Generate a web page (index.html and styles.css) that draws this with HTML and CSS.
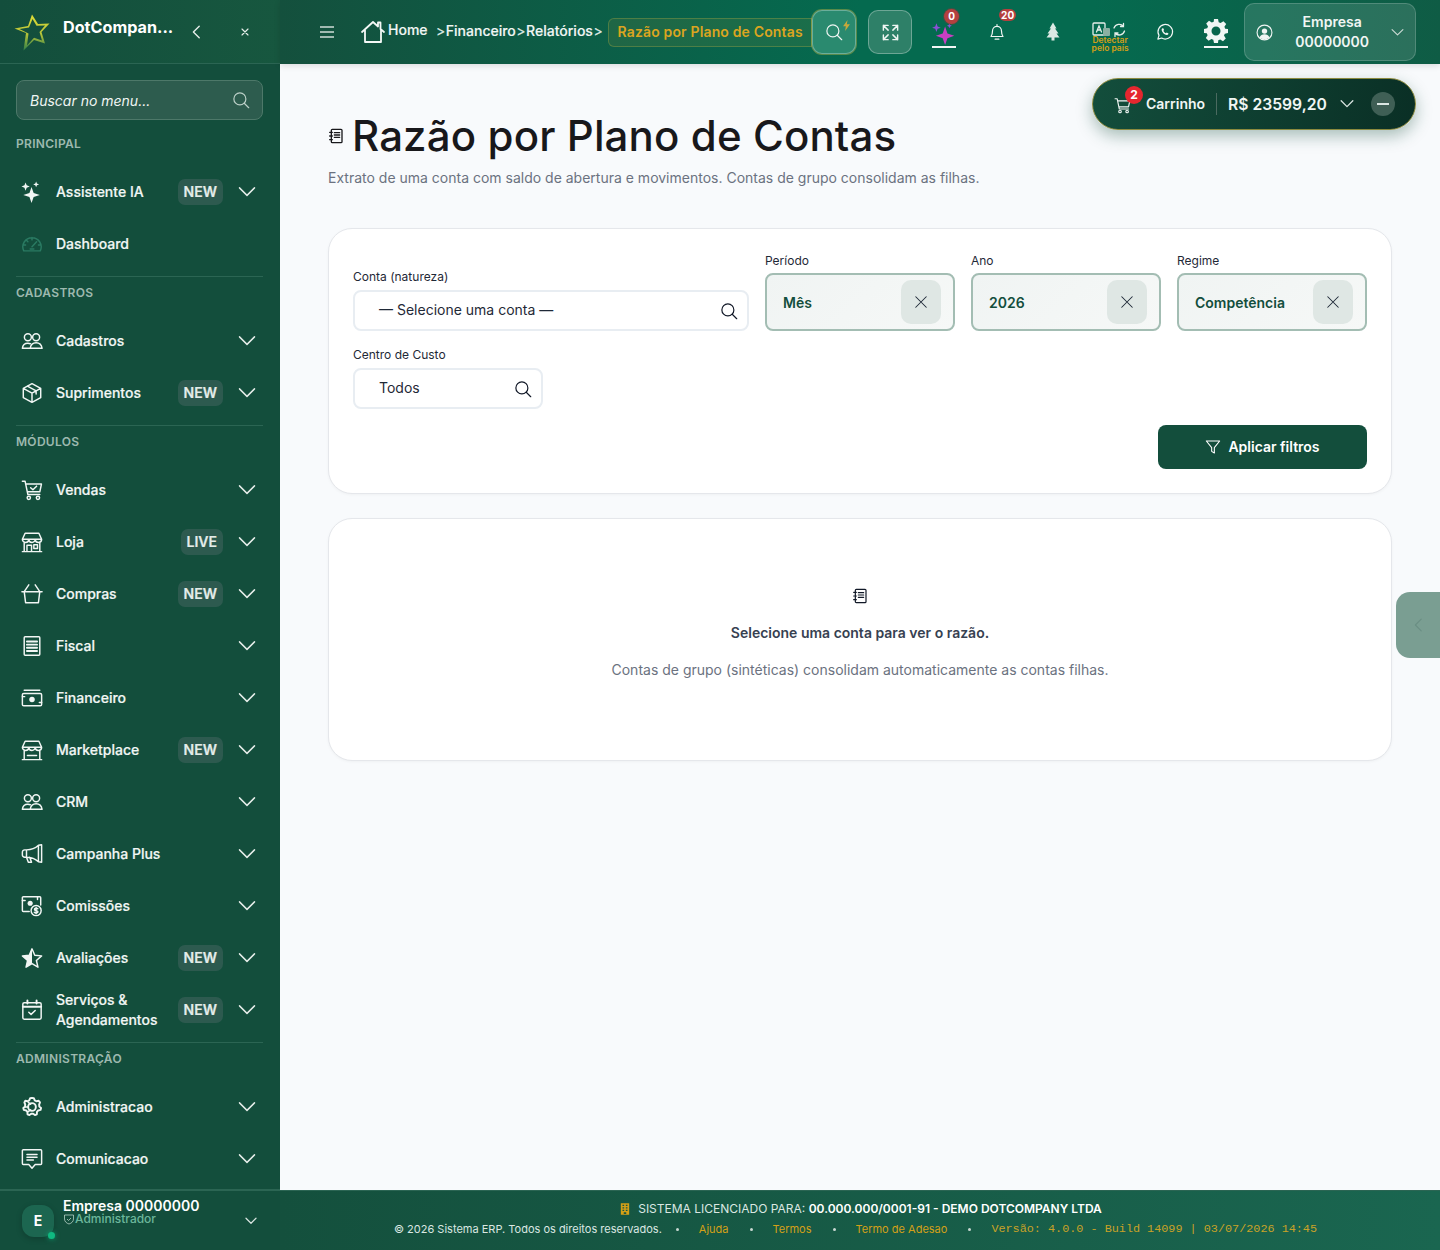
FILE: index.html
```html
<!DOCTYPE html>
<html lang="pt-BR">
<head>
  <meta charset="UTF-8">
  <title>Razão por Plano de Contas</title>
  <meta name="viewport" content="width=device-width, initial-scale=1.0">
  <link rel="stylesheet" href="styles.css">
</head>
<body>

<!-- icon set -->
<svg class="defs" aria-hidden="true">
  <symbol id="i-sparkle" viewBox="0 0 24 24"><path class="solid" d="M11.500 6.500L13.800 13 20.500 15.200 13.800 17.500 11.500 24 9.200 17.500 2.500 15.200 9.200 13ZM5 1.500L6.200 4.700 9.500 6 6.200 7.300 5 10.500 3.800 7.300.5 6 3.800 4.700ZM16.500 .5L17.400 2.800 19.700 3.700 17.400 4.600 16.500 6.900 15.600 4.600 13.300 3.700 15.600 2.800Z"/></symbol>
  <symbol id="i-gauge" viewBox="0 0 24 24"><path d="M3 19.500A10 10 0 1 1 21 19.500H3ZM12 5v2.500M5 13H2.500M21.500 13H19M6 8l1.500 1.500M12 15l5-5.500M10 17.500h4"/></symbol>
  <symbol id="i-users" viewBox="0 0 24 24"><circle cx="7.500" cy="8" r="3.800"/><circle cx="16.500" cy="8" r="3.800"/><path d="M1.500 20c.4-3.500 2.700-5.600 6-5.600 1 0 1.900.2 2.700.6M10 20c.6-3.800 3.200-6 6.500-6s5.900 2.200 6.500 6H1.500"/></symbol>
  <symbol id="i-box" viewBox="0 0 24 24"><path d="M12 1.800l9.500 5.200v10L12 22.200 2.500 17V7L12 1.800ZM2.500 7l9.500 5.200L21.500 7M12 12.200v10M7 4.400l9.500 5.200v3.600"/></symbol>
  <symbol id="i-cart" viewBox="0 0 24 24"><path d="M1.500 2.500h3l3 14.500h13M5.300 5.500h17l-1.800 8.500H7"/><circle cx="8.500" cy="20.500" r="1.800"/><circle cx="18.500" cy="20.500" r="1.800"/><path d="M10.500 9.500l2.500 2.300 4-4"/></symbol>
  <symbol id="i-store" viewBox="0 0 24 24"><path d="M1.500 22.500h21M3.500 12.500v10M20.500 12.500v10M4.500 2.500h15l3 6.500a3.500 3.500 0 0 1-7 0 3.500 3.500 0 0 1-7 0 3.500 3.500 0 0 1-7 0l3-6.500ZM1.500 9h21M6.500 22.500v-7h5v7M14 15h4v4h-4z"/></symbol>
  <symbol id="i-basket" viewBox="0 0 24 24"><path d="M1 9.500h22M3.500 9.500l5-7.500M20.500 9.500l-5-7.500M3.500 9.500l1.500 12h14l1.500-12"/></symbol>
  <symbol id="i-receipt" viewBox="0 0 24 24"><rect x="3.500" y="2" width="17" height="20" rx="1"/><path class="thick" d="M6.500 7h11M6.500 10.500h11M6.500 14h11M6.500 17.500h11"/></symbol>
  <symbol id="i-money" viewBox="0 0 24 24"><path d="M3.500 3.500h17" /><rect x="1.500" y="7" width="21" height="13.500" rx="1.500"/><circle class="solid" cx="12" cy="13.700" r="3"/><path d="M1.500 10.500h2.500M20 17h2.500"/></symbol>
  <symbol id="i-shop" viewBox="0 0 24 24"><path d="M1.500 22.500h21M3.500 12.500v10M20.500 12.500v10M4.500 2.500h15l3 6.500a3.500 3.500 0 0 1-7 0 3.500 3.500 0 0 1-7 0 3.500 3.500 0 0 1-7 0l3-6.500ZM1.500 9h21M7 18h10"/></symbol>
  <symbol id="i-mega" viewBox="0 0 24 24"><path d="M19 2.500v18M22.500 2v19L19 20.500C15 16.500 10 15.500 6 15.500H4a2.500 2.500 0 0 1-2.500-2.500v-3A2.500 2.500 0 0 1 4 7.500h2c4 0 9-1 13-5l3.500-.500ZM6 7.500v8l2 5.500h3.500L9.500 15.500"/></symbol>
  <symbol id="i-coins" viewBox="0 0 24 24"><path d="M9 18H2.500a1 1 0 0 1-1-1V3a1 1 0 0 1 1-1h18a1 1 0 0 1 1 1v8"/><circle class="solid" cx="10" cy="9" r="2.800"/><path d="M1.500 6h3M18 2v3"/><circle cx="16.500" cy="17" r="5.500"/><path d="M18.300 15c-.8-.9-3.600-.9-3.600.8 0 1.700 3.800.8 3.800 2.500 0 1.600-3 1.600-4 .6M16.500 13.500v7"/></symbol>
  <symbol id="i-star" viewBox="0 0 24 24"><path d="M12 2l3 7 7.500.7-5.700 5 1.700 7.300-6.500-3.900-6.500 3.900 1.700-7.300-5.700-5L9 9l3-7Z"/><path class="solid" d="M12 2L9 9l-7.500.7 5.700 5-1.700 7.300 6.500-3.900V2Z"/></symbol>
  <symbol id="i-cal" viewBox="0 0 24 24"><rect x="2" y="4" width="20" height="18" rx="1.500"/><path class="thick" d="M2 8.500h20M7 1.500V5M17 1.500V5"/><path d="M8.500 14.500l2.500 2.300 4.500-4.300"/></symbol>
  <symbol id="i-gear" viewBox="0 0 24 24"><path class="thick" d="M12 2l2 .3 1 2.400 1.800 1 2.500-.5 1.400 1.800-.9 2.400.2 2.100 1.900 1.500-.6 2.200-2.500.6-1.400 1.600-.1 2.600-2.100.8-2-1.500h-2l-2 1.500-2.100-.8-.1-2.600-1.400-1.600-2.500-.6-.6-2.200 1.900-1.500.2-2.100-.9-2.400L4.700 5.200l2.500.5 1.800-1 1-2.400L12 2Z"/><circle class="thick" cx="12" cy="12" r="4.200"/><path d="M4 12h4M8 7l2.500 2M8 17l2.500-2"/></symbol>
  <symbol id="i-chat" viewBox="0 0 24 24"><path d="M2.500 2h19a1 1 0 0 1 1 1v14a1 1 0 0 1-1 1h-6l-3.500 4-3.500-4h-6a1 1 0 0 1-1-1V3a1 1 0 0 1 1-1ZM6.500 7h11M6.500 10h11M6.500 13h7"/></symbol>
  <symbol id="i-chev" viewBox="0 0 24 24"><path d="M2 6.500l10 10 10-10"/></symbol>
  <symbol id="i-search" viewBox="0 0 24 24"><circle cx="10.500" cy="10.500" r="8"/><path d="M16.300 16.300l6 6"/></symbol>
  <symbol id="i-x" viewBox="0 0 24 24"><path d="M3 3l18 18M21 3L3 21"/></symbol>
  <symbol id="i-notebook" viewBox="0 0 24 24"><rect x="5" y="2" width="16" height="20" rx="1.500"/><path d="M9.500 7h8M9.500 10.500h8M9.500 14h8M2.500 6.500h4M2.500 12h4M2.500 17.500h4"/></symbol>
</svg>

<div class="app">

  <!-- Sidebar -->
  <aside class="sidebar">
    <div class="side-head">
      <svg class="logo" viewBox="0 0 40 38">
        <defs><linearGradient id="logoGrad" x1="0" y1="0" x2="0" y2="1"><stop offset="0" stop-color="#e0dd36"/><stop offset=".55" stop-color="#b4c239"/><stop offset="1" stop-color="#2f7f48"/></linearGradient></defs>
        <path fill="url(#logoGrad)" fill-rule="evenodd" d="M18 1.500L24 11 35.500 10.500 27.500 19 31 30.500 20 27 9.500 37.500 12 20 .5 15.500 14 13ZM18.500 6L15 14.500 5.500 16 14.500 20.500 13 32.500 20 24.800 28 27.500 25.500 19 31 12.500 22.500 12.700Z"/>
      </svg>
      <span class="brand">DotCompan...</span>
      <svg class="ic collapse"><use href="#i-chev"/></svg>
      <svg class="ic close-x"><use href="#i-x"/></svg>
    </div>

    <nav class="side-nav">
      <div class="side-search">
        <span>Buscar no menu...</span>
        <svg class="ic"><use href="#i-search"/></svg>
      </div>

      <div class="side-label">PRINCIPAL</div>
      <a class="item"><svg class="ic"><use href="#i-sparkle"/></svg><span class="name">Assistente IA</span><span class="badge">NEW</span><svg class="ic chev"><use href="#i-chev"/></svg></a>
      <a class="item"><svg class="ic dim"><use href="#i-gauge"/></svg><span class="name">Dashboard</span></a>

      <hr class="side-line">
      <div class="side-label">CADASTROS</div>
      <a class="item"><svg class="ic"><use href="#i-users"/></svg><span class="name">Cadastros</span><svg class="ic chev"><use href="#i-chev"/></svg></a>
      <a class="item"><svg class="ic"><use href="#i-box"/></svg><span class="name">Suprimentos</span><span class="badge">NEW</span><svg class="ic chev"><use href="#i-chev"/></svg></a>

      <hr class="side-line">
      <div class="side-label">MÓDULOS</div>
      <a class="item"><svg class="ic"><use href="#i-cart"/></svg><span class="name">Vendas</span><svg class="ic chev"><use href="#i-chev"/></svg></a>
      <a class="item"><svg class="ic"><use href="#i-store"/></svg><span class="name">Loja</span><span class="badge">LIVE</span><svg class="ic chev"><use href="#i-chev"/></svg></a>
      <a class="item"><svg class="ic"><use href="#i-basket"/></svg><span class="name">Compras</span><span class="badge">NEW</span><svg class="ic chev"><use href="#i-chev"/></svg></a>
      <a class="item"><svg class="ic"><use href="#i-receipt"/></svg><span class="name">Fiscal</span><svg class="ic chev"><use href="#i-chev"/></svg></a>
      <a class="item"><svg class="ic"><use href="#i-money"/></svg><span class="name">Financeiro</span><svg class="ic chev"><use href="#i-chev"/></svg></a>
      <a class="item"><svg class="ic"><use href="#i-shop"/></svg><span class="name">Marketplace</span><span class="badge">NEW</span><svg class="ic chev"><use href="#i-chev"/></svg></a>
      <a class="item"><svg class="ic"><use href="#i-users"/></svg><span class="name">CRM</span><svg class="ic chev"><use href="#i-chev"/></svg></a>
      <a class="item"><svg class="ic"><use href="#i-mega"/></svg><span class="name">Campanha Plus</span><svg class="ic chev"><use href="#i-chev"/></svg></a>
      <a class="item"><svg class="ic"><use href="#i-coins"/></svg><span class="name">Comissões</span><svg class="ic chev"><use href="#i-chev"/></svg></a>
      <a class="item"><svg class="ic"><use href="#i-star"/></svg><span class="name">Avaliações</span><span class="badge">NEW</span><svg class="ic chev"><use href="#i-chev"/></svg></a>
      <a class="item"><svg class="ic"><use href="#i-cal"/></svg><span class="name">Serviços &amp; Agendamentos</span><span class="badge">NEW</span><svg class="ic chev"><use href="#i-chev"/></svg></a>

      <hr class="side-line">
      <div class="side-label">ADMINISTRAÇÃO</div>
      <a class="item"><svg class="ic"><use href="#i-gear"/></svg><span class="name">Administracao</span><svg class="ic chev"><use href="#i-chev"/></svg></a>
      <a class="item"><svg class="ic"><use href="#i-chat"/></svg><span class="name">Comunicacao</span><svg class="ic chev"><use href="#i-chev"/></svg></a>
    </nav>

    <div class="side-user">
      <div class="avatar">E<i class="online"></i></div>
      <div class="user-text">
        <strong>Empresa 00000000</strong>
        <span class="role">
          <svg viewBox="0 0 24 24"><path d="M3 4h18v8c0 5-4 8.500-9 10C7 20.500 3 17 3 12V4ZM8 12l3 3 5-5"/></svg>Administrador
        </span>
      </div>
      <svg class="ic user-chev"><use href="#i-chev"/></svg>
    </div>
  </aside>

  <!-- Main column -->
  <div class="main">
    <header class="topbar">
      <svg class="burger" viewBox="0 0 16 14"><path d="M1 2h14M1 7h14M1 12h14"/></svg>

      <div class="crumbs">
        <svg class="home" viewBox="0 0 24 24"><path d="M1 12L12 2l5 4.500V2.500h2.500V9L23 12M4 9.500V22h16V9.500"/></svg>
        <span class="crumb crumb-home">Home</span>
        <span class="sep sep-first">&gt;</span>
        <span class="crumb">Financeiro</span>
        <span class="sep">&gt;</span>
        <span class="crumb">Relatórios</span>
        <span class="sep">&gt;</span>
        <span class="crumb-now">Razão por Plano de Contas</span>
      </div>

      <button class="square square-search">
        <svg class="ic"><use href="#i-search"/></svg>
        <svg class="bolt" viewBox="0 0 10 16"><path d="M6.500 0L0 9h4l-1 7 7-10H5.500l1-6Z"/></svg>
      </button>
      <button class="square square-expand">
        <svg class="ic" viewBox="0 0 24 24"><path d="M3 9V3h6M3 3l6 6M21 9V3h-6M21 3l-6 6M3 15v6h6M3 21l6-6M21 15v6h-6M21 21l-6-6"/></svg>
      </button>

      <div class="tool tool-ai">
        <svg class="ai" viewBox="0 0 24 24">
          <path fill="#c93fc3" d="M13 7l2.200 6.300L21.500 15.500 15.200 17.700 13 24 10.800 17.700 4.500 15.500 10.800 13.300Z"/>
          <path fill="#8b4fd6" d="M5 4l1.100 2.900L9 8 6.100 9.100 5 12 3.900 9.100 1 8 3.900 6.900Z"/>
          <path fill="#8b4fd6" d="M17 4l.7 1.600L19.300 6.300 17.700 7 17 8.600 16.300 7 14.700 6.300 16.300 5.600Z"/>
        </svg>
        <span class="count count-ai">0</span>
        <i class="underline"></i>
      </div>
      <div class="tool tool-bell">
        <svg class="ic" viewBox="0 0 24 24"><path d="M4 18c1.500-2 2-4 2-7.500a6 6 0 0 1 12 0c0 3.500.5 5.500 2 7.500H4ZM12 2v2.500M9.500 21.500h5"/></svg>
        <span class="count count-bell">20</span>
      </div>
      <div class="tool tool-tree">
        <svg class="tree" viewBox="0 0 16 18"><path d="M8 0l3.500 6H10l3.500 5H11.500l3 4H9.500v3h-3v-3h-5l3-4H2.500L6 6H4.500L8 0Z"/></svg>
      </div>
      <div class="tool tool-lang">
        <svg class="lang" viewBox="0 0 36 16">
          <rect x="1" y="1" width="12" height="12" rx="1"/>
          <path d="M4.500 10L7 4l2.500 6M5.500 8h3"/>
          <rect x="11" y="6" width="7" height="8" rx="1" class="lang-back"/>
          <path d="M22 6a5.500 5.500 0 0 1 9.500-1.500M32.500 9a5.500 5.500 0 0 1-9.500 2M31.500 1.500v3h-3M23 14.500v-3.500h3"/>
        </svg>
        <span class="lang-text">Detectar<br>pelo país</span>
      </div>
      <div class="tool tool-wa">
        <svg class="ic" viewBox="0 0 24 24"><path d="M2.500 21.500l1.500-5A9.700 9.700 0 1 1 7.500 20l-5 1.500Z"/><path class="wa-fill" d="M8.500 7c-1.500 1-1.300 3 .3 5.300 1.700 2.400 4.200 4 6 3.700 1-.2 1.800-1 1.800-2l-2.300-1.300-1 1c-1.400-.4-3-2-3.500-3.500l1-1L9.700 7H8.500Z"/></svg>
      </div>
      <div class="tool tool-gear">
        <svg class="bigear" viewBox="0 0 24 24"><path fill-rule="evenodd" d="M10 0h4l.700 3.200 1.900.8 2.800-1.800 2.800 2.800-1.800 2.800.8 1.900L24 10v4l-3.200.7-.8 1.900 1.800 2.800-2.800 2.800-2.800-1.800-1.900.8L14 24h-4l-.7-3.200-1.900-.8-2.800 1.800-2.800-2.800 1.800-2.800-.8-1.900L0 14v-4l3.200-.7.8-1.900-1.800-2.800 2.800-2.800L7.800 3.600l1.900-.8L10 0Zm2 7.500a4.500 4.500 0 1 0 0 9 4.500 4.500 0 0 0 0-9Z"/></svg>
        <i class="underline"></i>
      </div>

      <div class="company">
        <svg class="ic" viewBox="0 0 24 24"><circle cx="12" cy="12" r="10.500"/><circle class="solid" cx="12" cy="10" r="3.800"/><path class="solid" d="M5 19c1.300-3 3.800-4.500 7-4.500s5.700 1.500 7 4.500c-2 1.700-4.300 2.500-7 2.500s-5-.8-7-2.500Z"/></svg>
        <div class="company-name">Empresa<br>00000000</div>
        <svg class="ic"><use href="#i-chev"/></svg>
      </div>
    </header>

    <div class="cart">
      <span class="cart-icon">
        <svg class="ic" viewBox="0 0 24 24"><path d="M1.500 2.500h3l3 14.500h13M5.300 5.500h17l-1.800 8.500H7"/><circle cx="8.500" cy="20.500" r="1.800"/><circle cx="18.500" cy="20.500" r="1.800"/></svg>
        <b class="cart-count">2</b>
      </span>
      <span class="cart-label">Carrinho</span>
      <span class="cart-total">R$ 23599,20</span>
      <svg class="ic cart-chev"><use href="#i-chev"/></svg>
      <span class="cart-min"><i></i></span>
    </div>

    <button class="side-tab"><svg class="ic"><use href="#i-chev"/></svg></button>

    <main class="content">
      <h1 class="page-title"><svg class="ic"><use href="#i-notebook"/></svg>Razão por Plano de Contas</h1>
      <p class="page-sub">Extrato de uma conta com saldo de abertura e movimentos. Contas de grupo consolidam as filhas.</p>

      <section class="card filters">
        <div class="filter-grid">
          <div class="field field-wide">
            <label>Conta (natureza)</label>
            <div class="lookup"><span>— Selecione uma conta —</span><svg class="ic"><use href="#i-search"/></svg></div>
          </div>
          <div class="field">
            <label class="tile-label">Período</label>
            <div class="tile"><span>Mês</span><button class="tile-x"><svg class="ic"><use href="#i-x"/></svg></button></div>
          </div>
          <div class="field">
            <label class="tile-label">Ano</label>
            <div class="tile"><span>2026</span><button class="tile-x"><svg class="ic"><use href="#i-x"/></svg></button></div>
          </div>
          <div class="field">
            <label class="tile-label">Regime</label>
            <div class="tile"><span>Competência</span><button class="tile-x"><svg class="ic"><use href="#i-x"/></svg></button></div>
          </div>
          <div class="field">
            <label>Centro de Custo</label>
            <div class="lookup"><span>Todos</span><svg class="ic"><use href="#i-search"/></svg></div>
          </div>
        </div>
        <div class="filter-actions">
          <button class="apply">
            <svg class="ic" viewBox="0 0 24 24"><path d="M2 3h20l-8 10v8l-4-2.500V13L2 3Z"/></svg>Aplicar filtros
          </button>
        </div>
      </section>

      <section class="card empty">
        <svg class="ic"><use href="#i-notebook"/></svg>
        <p class="empty-title">Selecione uma conta para ver o razão.</p>
        <p class="empty-sub">Contas de grupo (sintéticas) consolidam automaticamente as contas filhas.</p>
      </section>
    </main>

    <footer class="footer">
      <div class="foot-line">
        <svg class="foot-ic" viewBox="0 0 12 14"><path d="M1 0h10v14H1V0Zm2 2v1.500h2V2H3Zm4 0v1.500h2V2H7ZM3 5v1.500h2V5H3Zm4 0v1.500h2V5H7ZM3 8v1.500h2V8H3Zm4 0v1.500h2V8H7Zm-2.500 3v2h3v-2h-3Z"/></svg>
        <span>SISTEMA LICENCIADO PARA: <strong>00.000.000/0001-91 - DEMO DOTCOMPANY LTDA</strong></span>
      </div>
      <div class="foot-links">
        <span>© 2026 Sistema ERP. Todos os direitos reservados.</span>
        <i class="dot-first"></i><a>Ajuda</a>
        <i></i><a>Termos</a>
        <i></i><a>Termo de Adesao</a>
        <i></i><code>Versão: 4.0.0 - Build 14099 | 03/07/2026 14:45</code>
      </div>
    </footer>
  </div>
</div>

</body>
</html>
```

FILE: styles.css
```css
* { box-sizing: border-box; }
html, body { margin: 0; height: 100%; }
body { font-family: Inter, "Liberation Sans", sans-serif; color: #1f2937; background: #f8fafc; overflow: hidden; }
button { font-family: inherit; border: none; cursor: pointer; padding: 0; }
p, h1 { margin: 0; }
.defs { display: none; }

/* icons: stroke by default, .solid parts are filled */
.ic { width: 22px; height: 22px; fill: none; stroke: currentColor; stroke-width: 1.6; stroke-linecap: round; stroke-linejoin: round; flex: none; }
.solid { fill: currentColor; stroke: none; }
.thick { stroke-width: 2.1; }

.app { display: flex; height: 1250px; }

/* ---------- Sidebar ---------- */
.sidebar { width: 280px; flex: none; background: #134e3c; color: #f1f6f4; display: flex; flex-direction: column; }
.side-head { height: 64px; flex: none; display: flex; align-items: center; padding-left: 14px; border-bottom: 1px solid #2b6553; background: linear-gradient(90deg, #134e3c, #17573f); }
.logo { width: 40px; height: 38px; flex: none; }
.brand { width: 111px; margin: -9px 0 0 9px; font-size: 16.200px; font-weight: 700; color: #fff; white-space: nowrap; }
.collapse { width: 14px; height: 14px; margin-left: 15px; transform: rotate(90deg); color: #e5ede9; stroke-width: 2.400; }
.close-x { width: 8px; height: 8px; margin-left: 38px; stroke-width: 3.500; color: #e5ede9; }

.side-nav { flex: 1; padding: 16px 17px 0 16px; overflow: hidden; }
.side-search { height: 40px; display: flex; align-items: center; justify-content: space-between; padding: 0 12px 0 13px; background: #2d5c4e; border: 1px solid #4d7869; border-radius: 8px; font-size: 14px; font-style: italic; color: #f1f6f4; }
.side-search .ic { width: 18px; height: 18px; color: #bcd0c8; }
.side-label { margin: 16px 0 15px; font-size: 12px; line-height: 15px; font-weight: 600; letter-spacing: .3px; color: #9db9af; }
.side-line { height: 1px; margin: 6px 0 0; border: none; background: #2b6553; }
.side-line + .side-label { margin-top: 8px; }
.item { height: 52px; display: flex; align-items: center; padding: 0 7px 0 5px; font-size: 14px; font-weight: 500; line-height: 20px; -webkit-text-stroke: .2px; }
.item .name { flex: 1; margin-left: 13px; }
.item .dim { color: #2a7a62; }
.badge { padding: 0 6px; margin-left: 8px; line-height: 26px; border-radius: 7px; background: #2d5a4f; font-weight: 600; color: #e4ece9; }
.chev { width: 18px; height: 18px; margin-left: 15px; color: #e5ede9; stroke-width: 1.900; }

.side-user { height: 61px; flex: none; display: flex; align-items: center; padding: 0 22px; border-top: 2px solid #2b6553; position: relative; }
.avatar { width: 32px; height: 32px; flex: none; position: relative; display: flex; align-items: center; justify-content: center; background: #1c6650; border-radius: 12px; font-size: 14px; font-weight: 700; color: #fff; box-shadow: 0 2px 6px rgba(0,0,0,.2); }
.online { position: absolute; right: -1px; bottom: -2px; width: 7px; height: 7px; border-radius: 50%; background: #10b981; box-shadow: 0 0 5px #0d9f70; }
.user-text { width: 170px; margin: -18px 0 0 9px; line-height: 14px; }
.user-text strong { display: block; font-size: 14px; font-weight: 600; color: #fff; white-space: nowrap; }
.role { display: flex; align-items: center; font-size: 12px; line-height: 11px; font-weight: 500; color: #6cb79b; }
.role svg { width: 12px; height: 12px; fill: none; stroke: #b8d2c8; stroke-width: 1.6; }
.user-chev { width: 12px; height: 12px; margin-left: 12px; color: #dbe6e2; stroke-width: 2.400; }

/* ---------- Top bar ---------- */
.main { flex: 1; min-width: 0; display: flex; flex-direction: column; position: relative; }
.topbar { height: 64px; flex: none; display: flex; align-items: center; padding-left: 39px; color: #f1f6f4; background: linear-gradient(90deg, #14503d 0%, #056a4f 50%, #056a4f 70%, #0f5c45 100%); box-shadow: 0 2px 6px rgba(0,0,0,.12); position: relative; z-index: 2; }
.burger { width: 16px; height: 14px; flex: none; fill: none; stroke: #cfddd7; stroke-width: 1.4; }
.crumbs { display: flex; align-items: center; margin-left: 25px; font-size: 14px; font-weight: 500; -webkit-text-stroke: .15px; }
.home { width: 26px; height: 24px; margin-right: 2px; fill: none; stroke: #f4f8f6; stroke-width: 1.800; stroke-linejoin: round; stroke-linecap: round; }
.crumb { margin-top: -4px; white-space: nowrap; }
.crumb-home { margin-top: -5px; }
.sep { margin: -4px .5px 0; font-weight: 400; color: #dbe7e2; }
.sep-first { margin-left: 8.500px; }
.crumb-now { margin: 0 0 0 5px; width: 204px; height: 29px; line-height: 25px; text-align: center; font-weight: 600; letter-spacing: .15px; color: #dba520; white-space: nowrap; background: rgba(120,140,60,.18); border: 1px solid rgba(170,170,70,.35); border-radius: 6px 0 0 6px; -webkit-text-stroke: 0; }

.square { width: 44px; height: 44px; flex: none; display: flex; align-items: center; justify-content: center; position: relative; border-radius: 10px; color: #eef5f2; background: #2a8a6f; border: 1px solid rgba(255,255,255,.3); }
.square-search { box-shadow: 0 0 0 1px rgba(190,180,70,.45); }
.square-search .ic { width: 18px; height: 18px; }
.bolt { position: absolute; top: 9px; right: 5px; width: 7px; height: 11px; fill: #c9a83a; }
.square-expand { margin-left: 12px; background: #2e8068; }
.square-expand .ic { width: 19px; height: 19px; stroke-width: 1.8; }

.tool { height: 64px; flex: none; display: flex; align-items: center; justify-content: center; position: relative; }
.tool-ai { width: 56px; margin-left: 4px; }
.tool-bell { width: 50px; }
.tool-tree { width: 62px; }
.tool-lang { width: 52px; }
.tool-wa { width: 58px; }
.tool-gear { width: 44px; }
.tool-bell .ic, .tool-wa .ic { width: 18px; height: 18px; }
.ai { width: 26px; height: 26px; margin-top: -1px; }
.tree { width: 16px; height: 19px; margin-top: -1px; fill: #dce9e4; }
.wa-fill { fill: currentColor; stroke: none; }
.underline { position: absolute; left: 50%; bottom: 16px; width: 24px; height: 2px; margin-left: -12px; background: #f1f6f4; }
.count { position: absolute; font-size: 10px; font-weight: 700; line-height: 14px; color: #fff; background: #b5403f; text-align: center; }
.count-ai { top: 9px; left: 28px; width: 15px; height: 15px; border-radius: 50%; box-shadow: 0 0 0 1px rgba(120,60,60,.5); }
.count-bell { top: 9px; left: 27px; width: 17px; height: 12px; line-height: 12px; border-radius: 6px; }
.lang { width: 36px; height: 16px; margin-top: -4px; fill: none; stroke: #e6efeb; stroke-width: 1.3; stroke-linecap: round; }
.lang-back { fill: #8bb0a2; stroke: none; }
.lang-text { position: absolute; top: 36px; left: 0; right: 0; text-align: center; font-size: 8.500px; line-height: 8px; font-weight: 600; color: #d4a017; }
.bigear { width: 24px; height: 24px; margin-top: -2px; fill: #f1f6f4; }

.company { width: 172px; height: 58px; margin-left: 6px; flex: none; display: flex; align-items: center; padding: 0 11px; background: rgba(255,255,255,.12); border: 1px solid rgba(255,255,255,.18); border-radius: 10px; }
.company .ic { width: 17px; height: 17px; }
.company .ic:last-child { width: 13px; height: 13px; color: #cfddd7; stroke-width: 2; }
.company-name { flex: 1; text-align: center; font-size: 14px; line-height: 20px; font-weight: 600; }

/* ---------- Floating bits ---------- */
.cart { position: absolute; top: 78px; right: 24px; z-index: 3; width: 324px; height: 52px; display: flex; align-items: center; padding-left: 21px; color: #f1f6f4; background: linear-gradient(100deg, #134e3c, #0a2f25); border: 1px solid #8b8a3e; border-radius: 26px; box-shadow: 0 6px 16px rgba(19,78,60,.35); }
.cart-icon { position: relative; width: 18px; height: 18px; flex: none; }
.cart-icon .ic { width: 17px; height: 17px; margin-top: 2px; }
.cart-count { position: absolute; top: -9px; left: 11px; width: 18px; height: 18px; border-radius: 50%; background: #e5272f; font-size: 12px; line-height: 18px; text-align: center; font-weight: 700; color: #fff; }
.cart-label { margin-left: 14px; padding-right: 11px; border-right: 1px solid #4b6a60; font-size: 14px; line-height: 22px; font-weight: 600; }
.cart-total { margin-left: 11px; font-size: 15.700px; font-weight: 600; white-space: nowrap; }
.cart-chev { width: 14px; height: 14px; margin-left: 13px; color: #dbe6e2; stroke-width: 2.200; }
.cart-min { width: 24px; height: 24px; margin-left: 17px; display: flex; align-items: center; justify-content: center; border-radius: 50%; background: #3f5f55; }
.cart-min i { width: 12px; height: 2px; background: #dbe6e2; }

.side-tab { position: absolute; top: 592px; right: 0; z-index: 3; width: 44px; height: 66px; display: flex; align-items: center; padding-left: 15px; background: #7a9e92; border-radius: 14px 0 0 14px; color: #6b8f84; }
.side-tab .ic { width: 14px; height: 14px; transform: rotate(90deg); stroke-width: 2; }

/* ---------- Content ---------- */
.content { flex: 1; padding: 48px 48px 0; }
.page-title { display: flex; align-items: center; font-size: 42px; letter-spacing: .13px; line-height: 48px; font-weight: 500; color: #18181b; white-space: nowrap; }
.page-title .ic { width: 16px; height: 18px; margin-right: 8px; stroke-width: 2; }
.page-sub { margin: 8px 0 40px; font-size: 14px; line-height: 20px; color: #6b7280; }
.card { background: #fff; border: 1px solid #e5e7eb; border-radius: 24px; box-shadow: 0 1px 3px rgba(0,0,0,.04); }
.filters { padding: 24px; }
.filter-grid { display: grid; grid-template-columns: repeat(5, 190px); gap: 16px; align-items: end; }
.field-wide { grid-column: span 2; }
.field label { display: block; margin-bottom: 6px; font-size: 12px; line-height: 15px; color: #1f2937; }
.field .tile-label { margin-bottom: 5px; }
.lookup { height: 41px; display: flex; align-items: center; justify-content: space-between; padding: 0 9px 2px 24px; border: 2px solid #e8edf2; border-radius: 8px; font-size: 14px; color: #1f2937; }
.lookup .ic { width: 18px; height: 18px; margin-top: 2px; color: #111827; }
.tile { height: 58px; display: flex; align-items: center; justify-content: space-between; padding: 0 12px 0 16px; border: 2px solid #a3bdb3; border-radius: 8px; background: linear-gradient(135deg, #f0f4f3, #f6f8f7); font-size: 14px; font-weight: 600; color: #134e3c; }
.tile-x { width: 40px; height: 44px; display: flex; align-items: center; justify-content: center; border-radius: 10px; background: #dfe7e4; color: #1f2937; }
.tile-x .ic { width: 14px; height: 14px; stroke-width: 1.800; }
.filter-actions { display: flex; justify-content: flex-end; margin-top: 16px; }
.apply { width: 209px; height: 44px; padding-bottom: 2px; display: flex; align-items: center; justify-content: center; gap: 7px; border-radius: 8px; background: #134e3c; color: #fff; font-size: 14px; font-weight: 600; }
.apply .ic { width: 16px; height: 16px; margin-top: 2px; }
.empty { margin-top: 24px; padding: 68px 0 80px; display: flex; flex-direction: column; align-items: center; text-align: center; }
.empty .ic { width: 16px; height: 18px; color: #111827; stroke-width: 1.800; }
.empty-title { margin-top: 18px; font-size: 14px; line-height: 20px; font-weight: 600; color: #374151; }
.empty-sub { margin-top: 17px; font-size: 14px; line-height: 20px; color: #6b7280; }

/* ---------- Footer ---------- */
.footer { height: 60px; flex: none; display: flex; flex-direction: column; align-items: center; padding-top: 9px; color: #dbe7e2; background: linear-gradient(90deg, #14503d, #1a6650); border-top: 1px solid #2b6553; }
.foot-line { display: flex; align-items: center; gap: 8px; font-size: 12px; line-height: 17px; margin-left: 2px; }
.foot-line strong { font-weight: 600; color: #fff; }
.foot-ic { width: 10px; height: 12px; fill: #d4a017; }
.foot-links { display: flex; align-items: center; margin: 5px 9px 0 0; font-size: 11px; line-height: 15px; white-space: nowrap; }
.foot-links i { width: 3px; height: 3px; margin: 0 20px 0 21px; border-radius: 50%; background: #c9d8d2; }
.foot-links .dot-first { margin-left: 14px; }
.foot-links a { color: #d4a017; }
.foot-links code { font-family: "Liberation Mono", monospace; font-size: 11.800px; color: #c9a227; }
```
